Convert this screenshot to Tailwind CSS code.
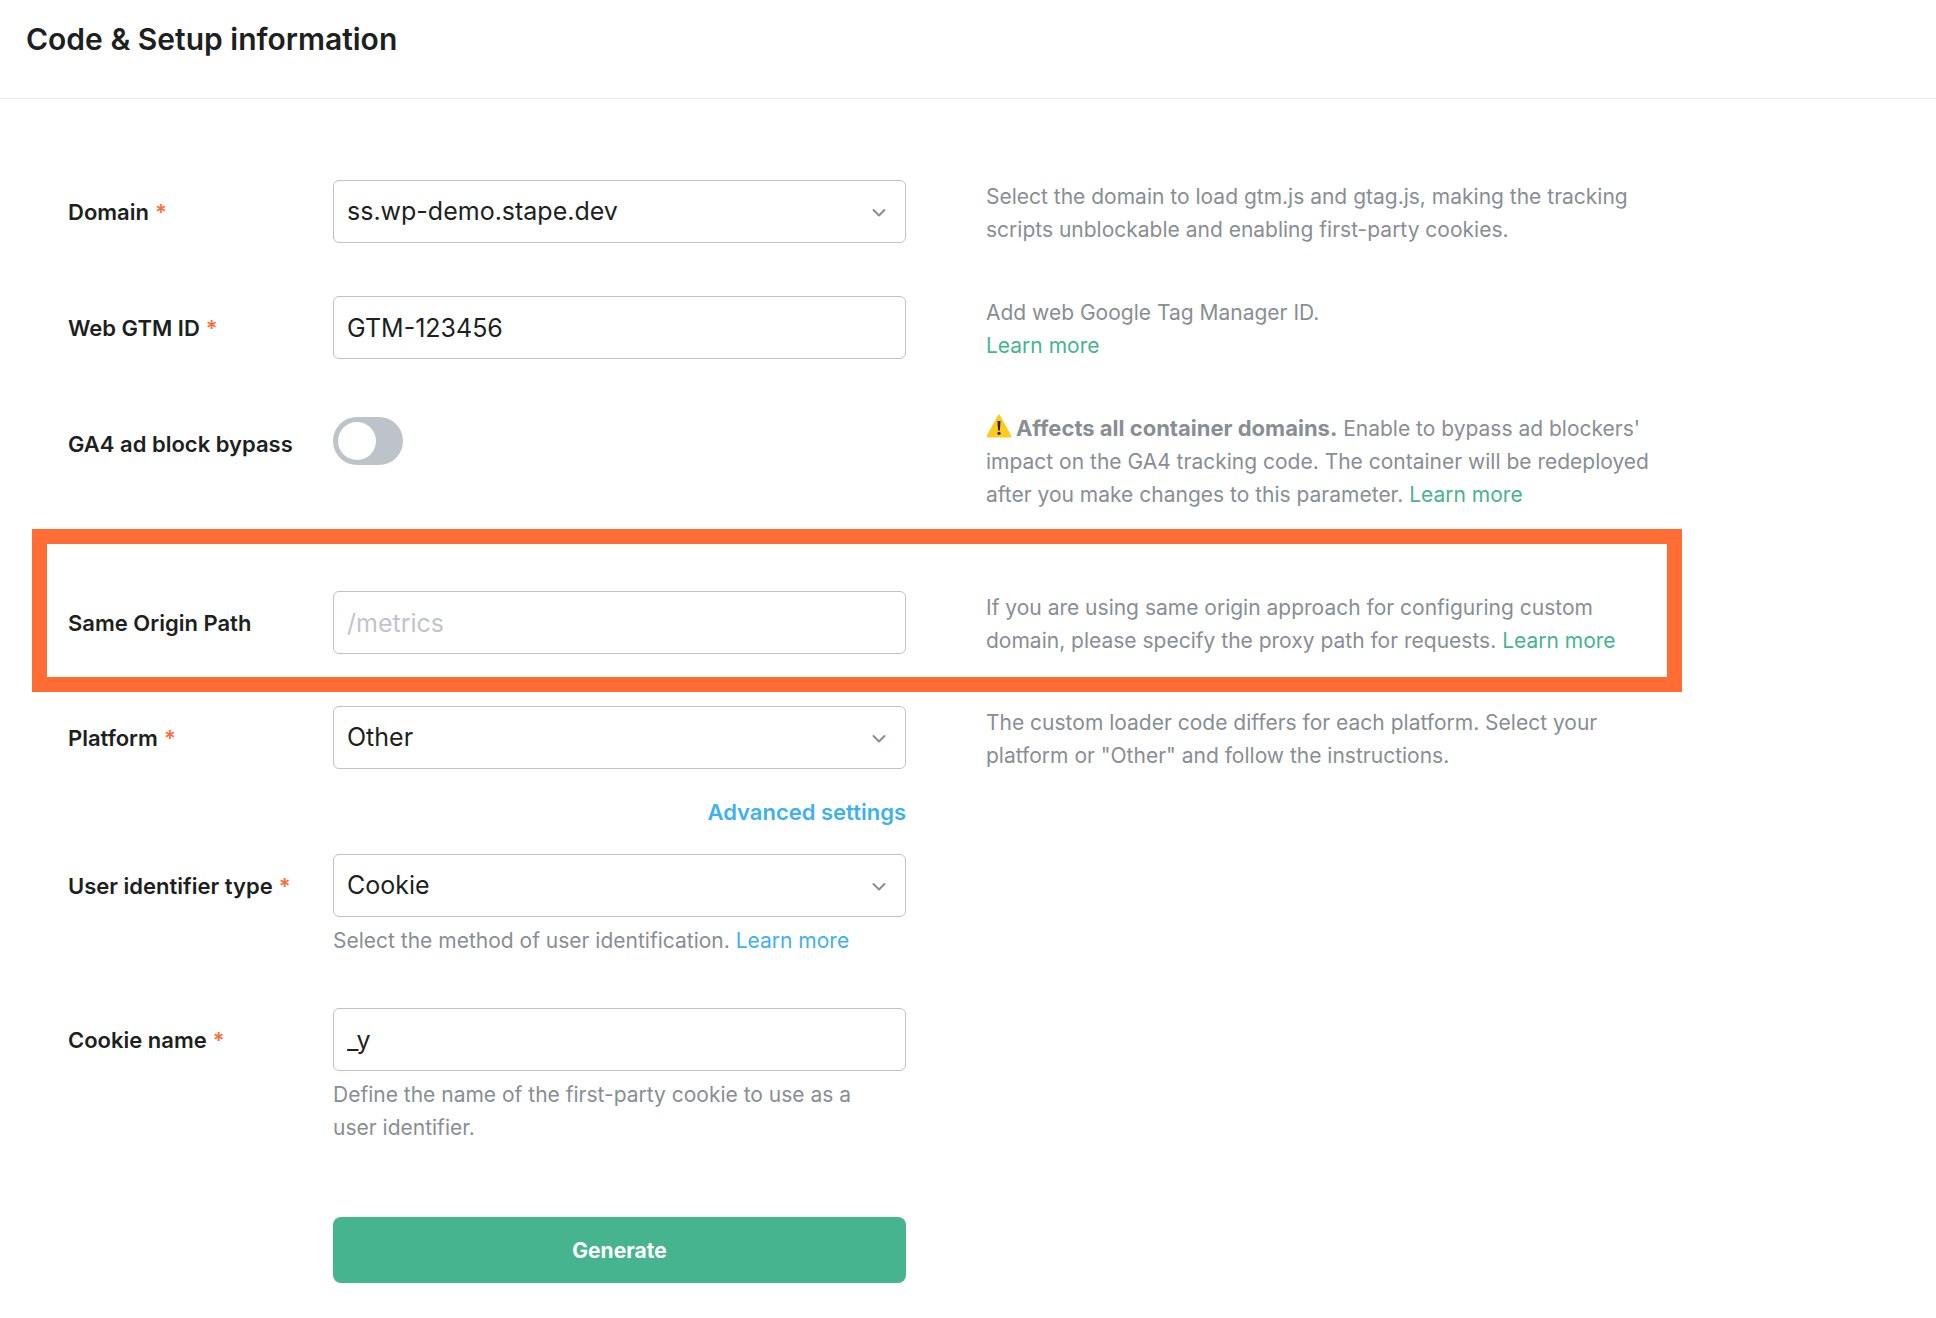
<!DOCTYPE html>
<html lang="en">
<head>
<meta charset="utf-8">
<meta name="viewport" content="width=device-width, initial-scale=1">
<title>Code &amp; Setup information</title>
<script src="https://cdn.jsdelivr.net/npm/@tailwindcss/browser@4"></script>
</head>
<body class="min-h-screen bg-white font-['Inter',sans-serif] text-[#1d1f20]">
<header class="border-b border-[#ebeced] px-[26px] pt-[19px] pb-[39px]">
  <h1 class="text-[30px] leading-10 font-semibold">Code &amp; Setup information</h1>
</header>
<form class="mt-[81px] max-w-[1667px] pb-9 pl-[68px] text-[21px] leading-[33px]">
  <div class="grid grid-cols-[265px_573fr_761fr]">
    <label for="domain" class="flex h-16 items-center gap-1.5 text-[22px] font-semibold">Domain <span class="text-[#ff6c34]">*</span></label>
    <div class="relative">
      <select id="domain" class="block h-[63px] w-full appearance-none rounded-md border border-[#bcc3c9] bg-white px-[13px] text-[25px]"><option>ss.wp-demo.stape.dev</option></select>
      <svg class="pointer-events-none absolute top-7 right-5 h-2.5 w-3.5" viewBox="0 0 14 10" fill="none" stroke="#868e94" stroke-width="2" stroke-linecap="round" stroke-linejoin="round"><path d="M1.500 2l5.500 5.500 5.500-5.500"/></svg>
    </div>
    <p class="pl-20 text-[#888e93]">Select the domain to load gtm.js and gtag.js, making the tracking scripts unblockable and enabling first-party cookies.</p>
  </div>

  <div class="mt-[50px] grid grid-cols-[265px_573fr_761fr]">
    <label for="gtm" class="flex h-16 items-center gap-1.5 text-[22px] font-semibold">Web GTM ID <span class="text-[#ff6c34]">*</span></label>
    <input id="gtm" type="text" value="GTM-123456" class="h-[63px] w-full rounded-md border border-[#bcc3c9] bg-white px-[13px] text-[25px]">
    <p class="pl-20 text-[#888e93]">Add web Google Tag Manager ID.<br><a href="#" class="text-[#46b48f]">Learn more</a></p>
  </div>

  <div class="mt-[50px] grid grid-cols-[265px_573fr_761fr]">
    <label for="bypass" class="flex h-16 items-center text-[22px] font-semibold">GA4 ad block bypass</label>
    <div class="pt-[5px]">
      <input id="bypass" type="checkbox" role="switch" class="block h-12 w-[70px] appearance-none rounded-full bg-[#bcc3c9] p-[5px] before:block before:size-[38px] before:rounded-full before:bg-white checked:bg-[#46b48f] checked:before:ml-[22px]">
    </div>
    <p class="pl-20 text-[#888e93]"><svg class="mr-1 inline h-6 w-[26px] align-[-2px]" viewBox="0 0 26 24" role="img" aria-label="Warning"><path d="M13 1.500 24.500 22.500H1.500Z" fill="#fdcb1d" stroke="#fdcb1d" stroke-width="2" stroke-linejoin="round"/><path d="M11.500 7h3l-.6 9.500h-1.800Z" fill="#23252b"/><circle cx="13" cy="19.300" r="1.600" fill="#23252b"/></svg><b class="text-[22px] font-bold">Affects all container domains.</b> Enable to bypass ad blockers' impact on the GA4 tracking code. The container will be redeployed after you make changes to this parameter. <a href="#" class="text-[#46b48f]">Learn more</a></p>
  </div>

  <div class="mt-[18px] -mr-[15px] -ml-9 border-[15px] border-[#ff6c34] pt-[47px] pb-5 pl-[21px]">
    <div class="grid grid-cols-[265px_573fr_761fr]">
      <label for="path" class="flex h-16 items-center text-[22px] font-semibold">Same Origin Path</label>
      <input id="path" type="text" placeholder="/metrics" class="h-[63px] w-full rounded-md border border-[#bcc3c9] bg-white px-[13px] text-[25px] placeholder:text-[#bfc5ca]">
      <p class="pl-20 text-[#888e93]">If you are using same origin approach for configuring custom domain, please specify the proxy path for requests. <a href="#" class="text-[#46b48f]">Learn more</a></p>
    </div>
  </div>

  <div class="mt-3.5 grid grid-cols-[265px_573fr_761fr]">
    <label for="platform" class="flex h-16 items-center gap-1.5 text-[22px] font-semibold">Platform <span class="text-[#ff6c34]">*</span></label>
    <div>
      <div class="relative">
        <select id="platform" class="block h-[63px] w-full appearance-none rounded-md border border-[#bcc3c9] bg-white px-[13px] text-[25px]"><option>Other</option></select>
        <svg class="pointer-events-none absolute top-7 right-5 h-2.5 w-3.5" viewBox="0 0 14 10" fill="none" stroke="#868e94" stroke-width="2" stroke-linecap="round" stroke-linejoin="round"><path d="M1.500 2l5.500 5.500 5.500-5.500"/></svg>
      </div>
      <div class="mt-[27px] mb-[25px] flex justify-end"><button type="button" class="text-[22px] font-semibold text-[#3fb0f2]">Advanced settings</button></div>
    </div>
    <p class="pl-20 text-[#888e93]">The custom loader code differs for each platform. Select your platform or "Other" and follow the instructions.</p>
  </div>

  <div class="grid grid-cols-[265px_573fr_761fr]">
    <label for="idtype" class="flex h-16 items-center gap-1.5 text-[22px] font-semibold">User identifier type <span class="text-[#ff6c34]">*</span></label>
    <div>
      <div class="relative">
        <select id="idtype" class="block h-[63px] w-full appearance-none rounded-md border border-[#bcc3c9] bg-white px-[13px] text-[25px]"><option>Cookie</option></select>
        <svg class="pointer-events-none absolute top-7 right-5 h-2.5 w-3.5" viewBox="0 0 14 10" fill="none" stroke="#868e94" stroke-width="2" stroke-linecap="round" stroke-linejoin="round"><path d="M1.500 2l5.500 5.500 5.500-5.500"/></svg>
      </div>
      <p class="mt-[7px] text-[#888e93]">Select the method of user identification. <a href="#" class="text-[#3fb0f2]">Learn more</a></p>
    </div>
  </div>

  <div class="mt-[51px] grid grid-cols-[265px_573fr_761fr]">
    <label for="cookie" class="flex h-16 items-center gap-1.5 text-[22px] font-semibold">Cookie name <span class="text-[#ff6c34]">*</span></label>
    <div>
      <input id="cookie" type="text" value="_y" class="block h-[63px] w-full rounded-md border border-[#bcc3c9] bg-white px-[13px] text-[25px]">
      <p class="mt-[7px] pr-4 text-[#888e93]">Define the name of the first-party cookie to use as a user identifier.</p>
      <button type="submit" class="mt-[73px] h-[66px] w-full rounded-lg bg-[#46b48f] font-bold text-white">Generate</button>
    </div>
  </div>
</form>
</body>
</html>
